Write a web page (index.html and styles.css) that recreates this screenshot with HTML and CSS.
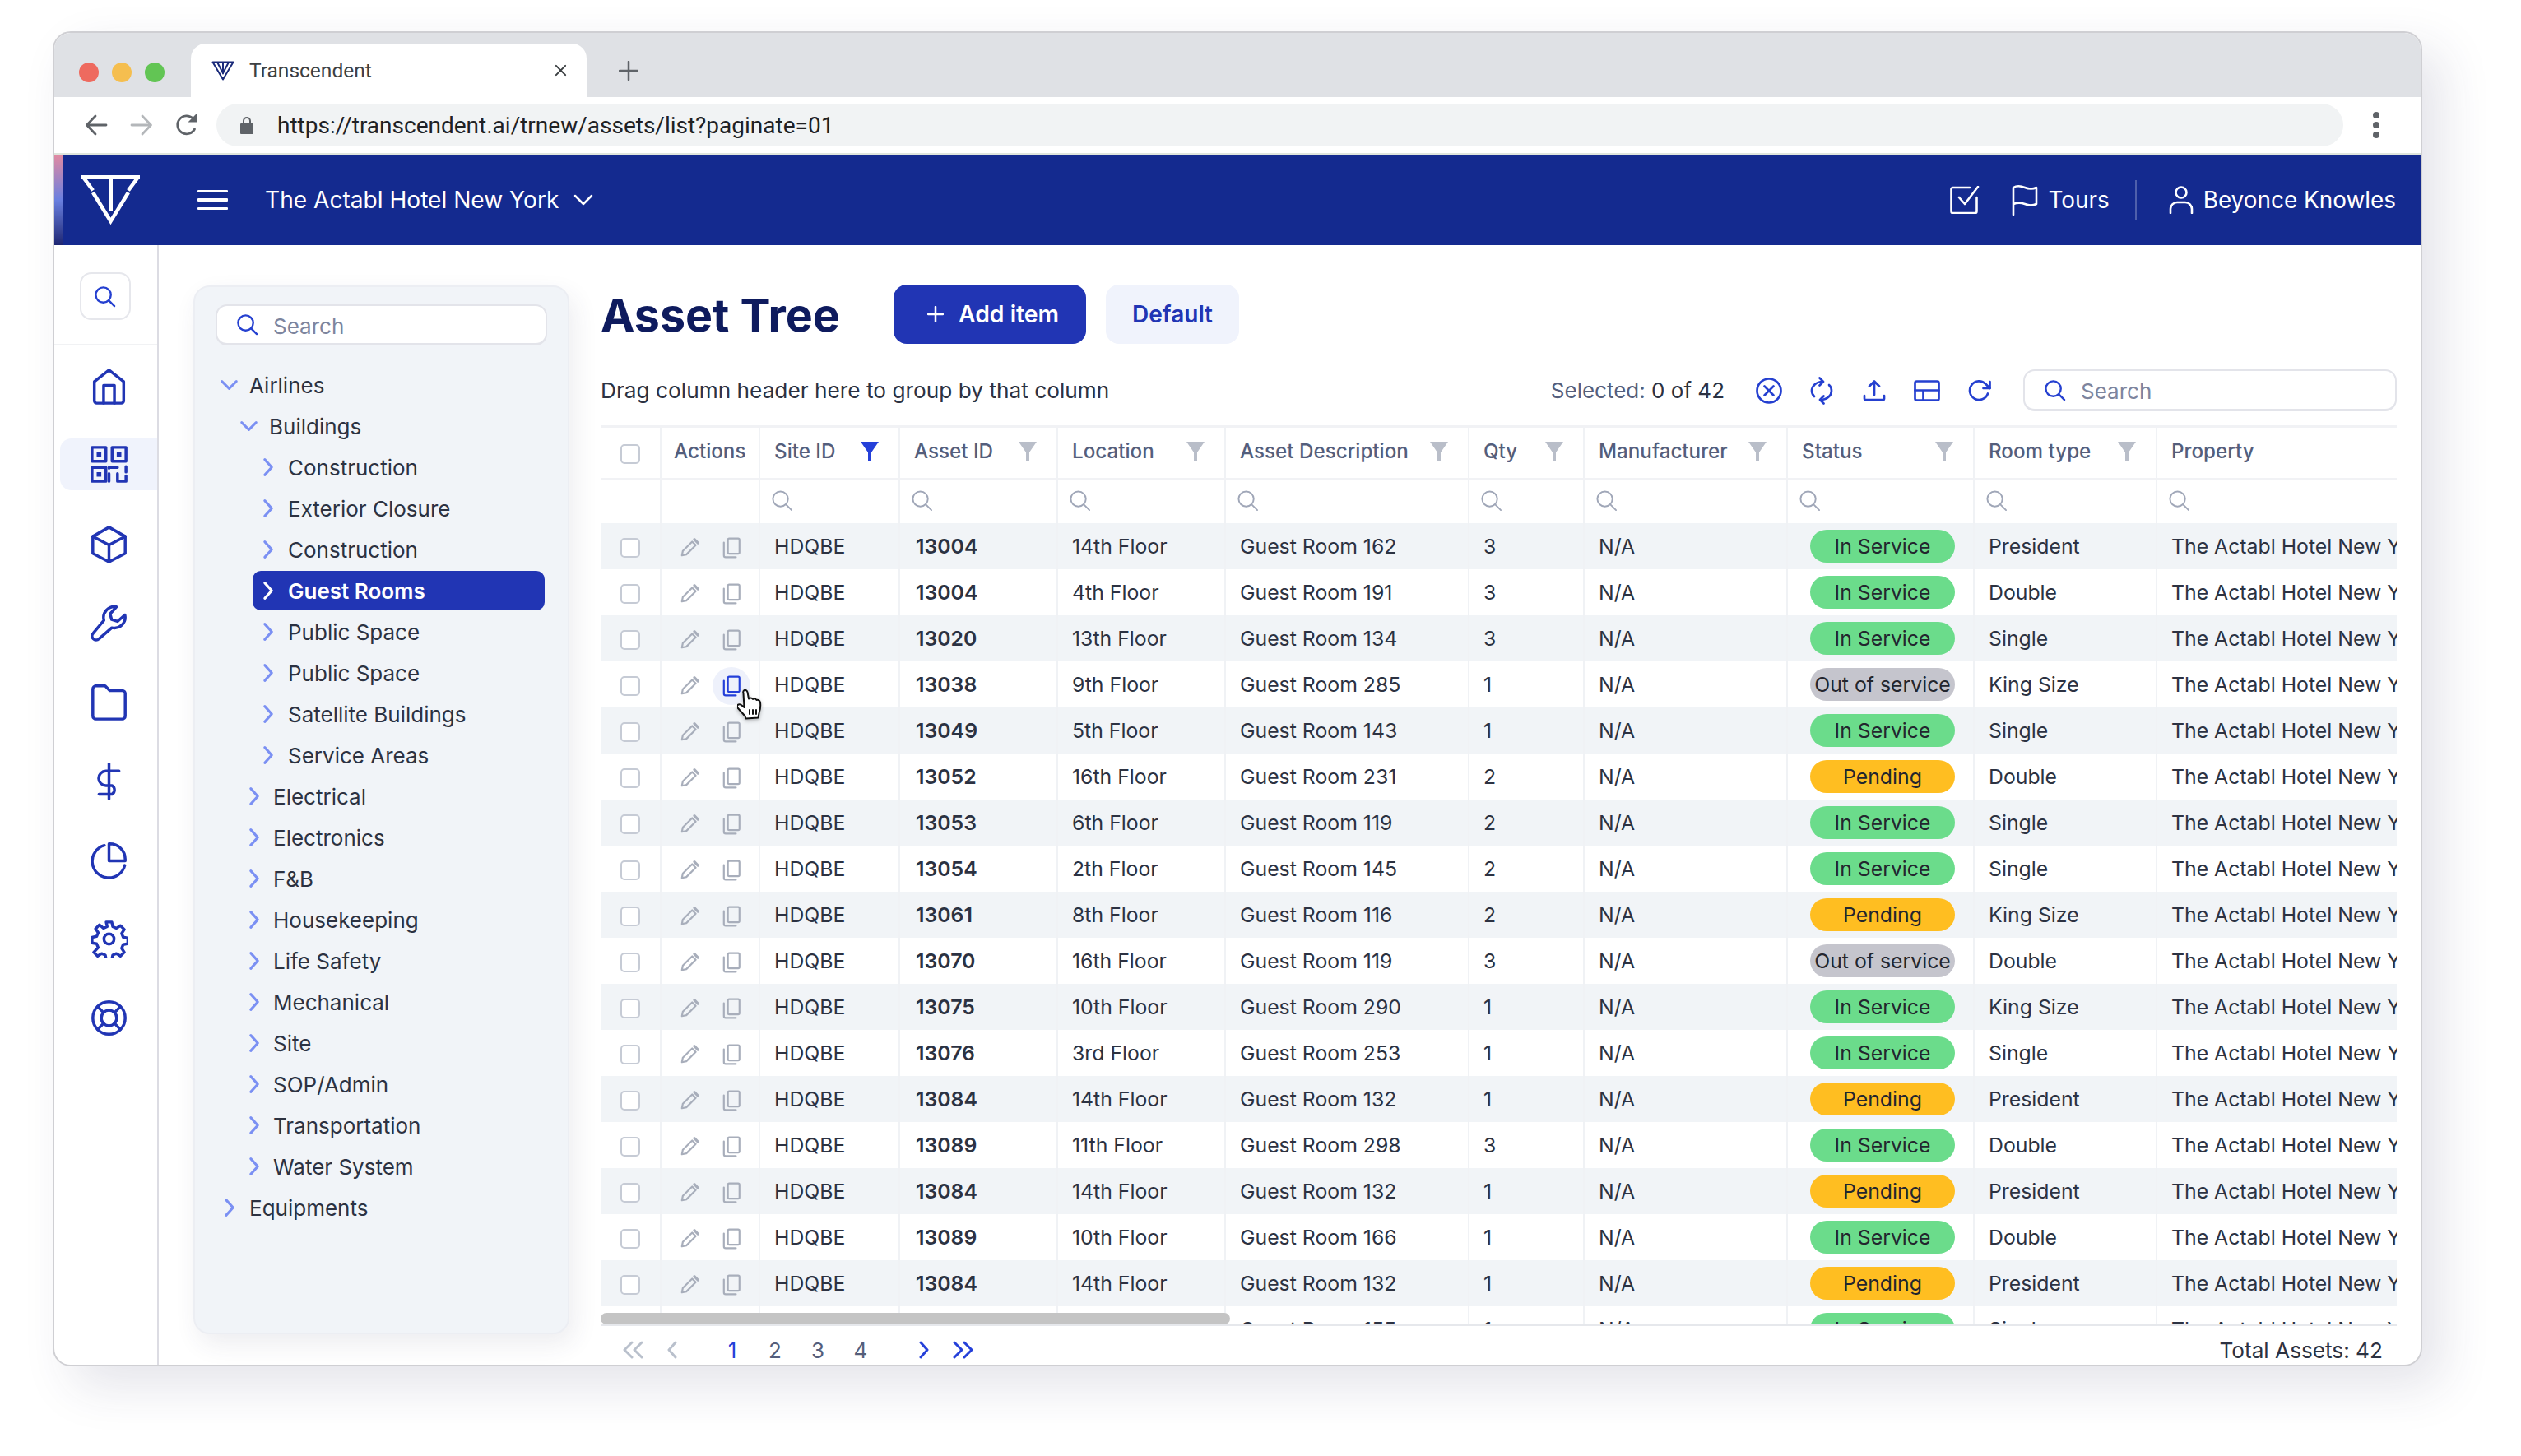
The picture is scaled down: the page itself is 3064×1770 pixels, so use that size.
FILE: index.html
```html
<!DOCTYPE html>
<html lang="en">
<head>
<meta charset="utf-8">
<title>Transcendent</title>
<link rel="stylesheet" href="styles.css">
</head>
<body>
<svg class="defs" width="0" height="0" aria-hidden="true">
  <symbol id="i-search" viewBox="0 0 28 28"><circle cx="12" cy="12" r="9.5"/><path d="M19 19l7 7"/></symbol>
  <symbol id="i-funnel" viewBox="0 0 22 24"><path class="solid" d="M0 0h22l-9 13v10a2 2 0 0 1-4 0V13z"/></symbol>
  <symbol id="i-pencil" viewBox="0 0 24 24"><path d="M3.500 20.500l1-5L15 5l4 4L8.500 19.500z"/><path d="M17.500 2.500l4 4" stroke-width="3"/></symbol>
  <symbol id="i-copy" viewBox="0 0 24 24"><rect x="8" y="1.500" width="13" height="17" rx="1.500"/><path d="M3.500 6v14.500a2 2 0 0 0 2 2H17"/></symbol>
  <symbol id="i-chev-r" viewBox="0 0 16 24"><path d="M3 2l9 10-9 10"/></symbol>
  <symbol id="i-chev-d" viewBox="0 0 24 16"><path d="M2 3l10 10L22 3"/></symbol>
</svg>

<div class="window">
  <div class="tabbar">
    <div class="dots"><span class="dot red"></span><span class="dot amber"></span><span class="dot green"></span></div>
    <div class="tab">
      <svg class="favicon" viewBox="0 0 28 24"><path d="M1.500 1.500h25L14 22.500zM7 1.500L14 15l7-13.500M14 1.500v14"/></svg>
      <span class="tab-title">Transcendent</span>
      <svg class="tab-x" viewBox="0 0 16 16"><path d="M2 2l12 12M14 2L2 14"/></svg>
    </div>
    <svg class="tab-plus" viewBox="0 0 24 24"><path d="M12 1v22M1 12h22"/></svg>
  </div>

  <div class="toolbar">
    <svg class="nav-arrow" viewBox="0 0 28 28"><path d="M26 14H3M13 3L2.500 14 13 25"/></svg>
    <svg class="nav-arrow faded" viewBox="0 0 28 28"><path d="M2 14h23M15 3l10.500 11L15 25"/></svg>
    <svg class="nav-arrow reload" viewBox="0 0 28 28"><path d="M23.500 19A11 11 0 1 1 21.500 6"/><path class="solid" d="M15.500 10.500H26V0z"/></svg>
    <div class="urlbar">
      <svg class="lock" viewBox="0 0 16 22"><path class="solid" d="M1 9h14a1 1 0 0 1 1 1v11a1 1 0 0 1-1 1H1a1 1 0 0 1-1-1V10a1 1 0 0 1 1-1z"/><path d="M4 10V6a4 4 0 0 1 8 0v4"/></svg>
      <span class="url">https://transcendent.ai/trnew/assets/list?paginate=01</span>
    </div>
    <div class="kebab"><i></i><i></i><i></i></div>
  </div>

  <header class="appbar">
    <div class="brand">
      <svg class="logo" viewBox="0 0 71 61"><path d="M0 2.200h71"/><path d="M1.500 1.500L14 18.500M69.500 1.500L57 18.500"/><path d="M14 21L35.500 56 57 21"/><path class="stem" d="M35.500 3v41"/></svg>
    </div>
    <div class="burger"><i></i><i></i><i></i></div>
    <span class="hotel">The Actabl Hotel New York</span>
    <svg class="hotel-chev" viewBox="0 0 24 16"><path d="M2 3l10 10L22 3"/></svg>
    <div class="appbar-right">
      <svg class="bar-check" viewBox="0 0 36 34"><path d="M24 2H3.500A2 2 0 0 0 1.500 4v27a2 2 0 0 0 2 2h27a2 2 0 0 0 2-2V14"/><path d="M11 14l7 8L34 1"/></svg>
      <svg class="bar-flag" viewBox="0 0 32 37"><path d="M2 36V3c5-3 9-2 14 0s10 2 14 0v20c-4 2-9 2-14 0S7 21 2 23"/></svg>
      <span class="bar-text tours">Tours</span>
      <span class="bar-sep"></span>
      <svg class="bar-user" viewBox="0 0 30 34"><circle cx="15" cy="8" r="6.500"/><path d="M2 33v-5a8 8 0 0 1 8-8h10a8 8 0 0 1 8 8v5"/></svg>
      <span class="bar-text">Beyonce Knowles</span>
    </div>
  </header>

  <div class="workspace">
    <nav class="rail">
      <div class="rail-top">
        <button class="rail-search" type="button"><svg class="ic-search-blue"><use href="#i-search"/></svg></button>
      </div>
      <div class="rail-items">
        <a class="rail-item"><svg viewBox="0 0 24 24"><path d="M2.500 21.500V9L12 1.500 21.500 9v12.500a1.500 1.500 0 0 1-1.500 1.500H4a1.500 1.500 0 0 1-1.500-1.500z"/><path d="M8.500 23V11.500h7V23"/></svg></a>
        <a class="rail-item active"><svg viewBox="0 0 24 24"><rect x="1" y="1" width="9" height="9"/><rect x="14" y="1" width="9" height="9"/><rect x="1" y="14" width="9" height="9"/><path class="solid" d="M4 4h3v3H4zM17 4h3v3h-3zM4 17h3v3H4z"/><path d="M12 14.500V14h5.500M23 13.500V17M17.500 18v5H23v-3.500M12 18v5"/></svg></a>
        <a class="rail-item"><svg viewBox="0 0 24 24"><path d="M12 1l10.500 6v11L12 23.500 1.500 18V7z"/><path d="M1.500 7L12 12.500 22.500 7M12 12.500v11"/></svg></a>
        <a class="rail-item"><svg viewBox="0 0 24 24"><path d="M22.300 6.700l-4.800 4.200-3.800-1.200-1-3.700L16.800 1.500A7 7 0 0 0 8.700 10.200L1.800 18.500a2.600 2.600 0 0 0 3.700 3.700l8.300-7.200a7 7 0 0 0 8.500-8.300z"/></svg></a>
        <a class="rail-item"><svg viewBox="0 0 24 24"><path d="M1.500 3.500a2 2 0 0 1 2-2h6l3 3h8a2 2 0 0 1 2 2V21a2 2 0 0 1-2 2h-17a2 2 0 0 1-2-2z"/></svg></a>
        <a class="rail-item"><svg viewBox="0 0 24 24"><path d="M12 .5v23M18.500 5.500H10a4.700 4.700 0 0 0 0 9.400h4a3.300 3.300 0 0 1 0 5.600H5.500"/></svg></a>
        <a class="rail-item"><svg viewBox="0 0 24 24"><path d="M9 2.500A10.700 10.700 0 1 0 22.200 15.500"/><path d="M12.500 1.500a10 10 0 0 1 10 10v1h-10.500V1.500z"/></svg></a>
        <a class="rail-item"><svg viewBox="0 0 24 24"><circle cx="12" cy="12" r="3.300"/><path d="M10.200 1h3.600l.6 3 2.400 1 2.600-1.700 2.500 2.500-1.700 2.600 1 2.400 3 .6v3.600l-3 .6-1 2.400 1.700 2.600-2.500 2.500-2.600-1.700-2.400 1-.6 3h-3.600l-.6-3-2.400-1-2.600 1.700-2.500-2.500L5 17.500l-1-2.400-3-.6v-3.600l3-.6 1-2.400-1.700-2.600 2.500-2.500L8.400 5l2.400-1z"/></svg></a>
        <a class="rail-item"><svg viewBox="0 0 24 24"><circle cx="12" cy="12" r="10.500"/><circle cx="12" cy="12" r="5"/><path d="M4.600 4.600l3.900 3.900M19.400 4.600l-3.900 3.900M4.600 19.400l3.900-3.900M19.400 19.400l-3.900-3.900"/></svg></a>
      </div>
    </nav>

    <aside class="tree-panel">
      <div class="input tree-search"><svg class="ic-search-blue"><use href="#i-search"/></svg><span>Search</span></div>
      <ul class="tree">
        <li class="node lv0"><svg class="chev-d"><use href="#i-chev-d"/></svg><span>Airlines</span></li>
        <li class="node lv1"><svg class="chev-d"><use href="#i-chev-d"/></svg><span>Buildings</span></li>
        <li class="node lv2"><svg class="chev-r"><use href="#i-chev-r"/></svg><span>Construction</span></li>
        <li class="node lv2"><svg class="chev-r"><use href="#i-chev-r"/></svg><span>Exterior Closure</span></li>
        <li class="node lv2"><svg class="chev-r"><use href="#i-chev-r"/></svg><span>Construction</span></li>
        <li class="node lv2 selected"><svg class="chev-r"><use href="#i-chev-r"/></svg><span>Guest Rooms</span></li>
        <li class="node lv2"><svg class="chev-r"><use href="#i-chev-r"/></svg><span>Public Space</span></li>
        <li class="node lv2"><svg class="chev-r"><use href="#i-chev-r"/></svg><span>Public Space</span></li>
        <li class="node lv2"><svg class="chev-r"><use href="#i-chev-r"/></svg><span>Satellite Buildings</span></li>
        <li class="node lv2"><svg class="chev-r"><use href="#i-chev-r"/></svg><span>Service Areas</span></li>
        <li class="node lv1b"><svg class="chev-r"><use href="#i-chev-r"/></svg><span>Electrical</span></li>
        <li class="node lv1b"><svg class="chev-r"><use href="#i-chev-r"/></svg><span>Electronics</span></li>
        <li class="node lv1b"><svg class="chev-r"><use href="#i-chev-r"/></svg><span>F&amp;B</span></li>
        <li class="node lv1b"><svg class="chev-r"><use href="#i-chev-r"/></svg><span>Housekeeping</span></li>
        <li class="node lv1b"><svg class="chev-r"><use href="#i-chev-r"/></svg><span>Life Safety</span></li>
        <li class="node lv1b"><svg class="chev-r"><use href="#i-chev-r"/></svg><span>Mechanical</span></li>
        <li class="node lv1b"><svg class="chev-r"><use href="#i-chev-r"/></svg><span>Site</span></li>
        <li class="node lv1b"><svg class="chev-r"><use href="#i-chev-r"/></svg><span>SOP/Admin</span></li>
        <li class="node lv1b"><svg class="chev-r"><use href="#i-chev-r"/></svg><span>Transportation</span></li>
        <li class="node lv1b"><svg class="chev-r"><use href="#i-chev-r"/></svg><span>Water System</span></li>
        <li class="node lv0b"><svg class="chev-r"><use href="#i-chev-r"/></svg><span>Equipments</span></li>
      </ul>
    </aside>

    <main class="content">
      <div class="title-row">
        <h1>Asset Tree</h1>
        <button class="btn primary" type="button"><svg viewBox="0 0 20 20"><path d="M10 1v18M1 10h18"/></svg>Add item</button>
        <button class="btn soft" type="button">Default</button>
      </div>
      <div class="grid-tools">
        <span class="group-hint">Drag column header here to group by that column</span>
        <span class="selected-count">Selected: <b>0 of 42</b></span>
        <div class="tool-icons">
          <svg viewBox="0 0 32 32"><circle cx="16" cy="16" r="14.500"/><path d="M10.500 10.500l11 11M21.500 10.500l-11 11"/></svg>
          <svg viewBox="0 0 32 34"><path d="M17 6C9 6 4 11.500 4 17c0 3 1 5 3 7M15 28c8 0 13-5.500 13-11 0-3-1-5-3-7"/><path d="M13.500 1.500L18 6l-4.500 4.500M18.500 32.500L14 28l4.500-4.500"/></svg>
          <svg viewBox="0 0 32 32"><path d="M16 21V5M10 10.500l6-6 6 6M4 22v4a1 1 0 0 0 1 1h22a1 1 0 0 0 1-1v-4"/></svg>
          <svg viewBox="0 0 32 32"><rect x="1.500" y="4.500" width="29" height="23" rx="2"/><path d="M1.500 15.500h29M11.500 15.500v12"/></svg>
          <svg viewBox="0 0 32 32"><path d="M28.500 5v8h-8"/><path d="M26 19.500a11.300 11.300 0 1 1-2.600-11.700L28.500 13"/></svg>
        </div>
        <div class="input grid-search"><svg class="ic-search-blue"><use href="#i-search"/></svg><span>Search</span></div>
      </div>

      <div class="grid-wrap">
        <table class="grid">
          <colgroup>
            <col class="c-check"><col class="c-actions"><col class="c-site"><col class="c-asset"><col class="c-loc"><col class="c-desc"><col class="c-qty"><col class="c-maker"><col class="c-status"><col class="c-room"><col class="c-prop">
          </colgroup>
          <thead>
            <tr class="head">
              <th class="center"><span class="box"></span></th>
              <th class="th-actions">Actions</th>
              <th>Site ID<svg class="funnel on"><use href="#i-funnel"/></svg></th>
              <th>Asset ID<svg class="funnel"><use href="#i-funnel"/></svg></th>
              <th>Location<svg class="funnel"><use href="#i-funnel"/></svg></th>
              <th>Asset Description<svg class="funnel"><use href="#i-funnel"/></svg></th>
              <th>Qty<svg class="funnel"><use href="#i-funnel"/></svg></th>
              <th>Manufacturer<svg class="funnel"><use href="#i-funnel"/></svg></th>
              <th>Status<svg class="funnel"><use href="#i-funnel"/></svg></th>
              <th>Room type<svg class="funnel"><use href="#i-funnel"/></svg></th>
              <th>Property</th>
            </tr>
            <tr class="filters">
              <td></td><td></td>
              <td><svg class="ic-filter"><use href="#i-search"/></svg></td>
              <td><svg class="ic-filter"><use href="#i-search"/></svg></td>
              <td><svg class="ic-filter"><use href="#i-search"/></svg></td>
              <td><svg class="ic-filter"><use href="#i-search"/></svg></td>
              <td><svg class="ic-filter"><use href="#i-search"/></svg></td>
              <td><svg class="ic-filter"><use href="#i-search"/></svg></td>
              <td><svg class="ic-filter"><use href="#i-search"/></svg></td>
              <td><svg class="ic-filter"><use href="#i-search"/></svg></td>
              <td><svg class="ic-filter"><use href="#i-search"/></svg></td>
            </tr>
          </thead>
          <tbody>
            <tr><td class="center"><span class="box"></span></td><td class="acts"><svg class="act"><use href="#i-pencil"/></svg><svg class="act"><use href="#i-copy"/></svg></td><td>HDQBE</td><td class="id">13004</td><td>14th Floor</td><td>Guest Room 162</td><td>3</td><td>N/A</td><td><span class="pill ok">In Service</span></td><td>President</td><td>The Actabl Hotel New York</td></tr>
            <tr><td class="center"><span class="box"></span></td><td class="acts"><svg class="act"><use href="#i-pencil"/></svg><svg class="act"><use href="#i-copy"/></svg></td><td>HDQBE</td><td class="id">13004</td><td>4th Floor</td><td>Guest Room 191</td><td>3</td><td>N/A</td><td><span class="pill ok">In Service</span></td><td>Double</td><td>The Actabl Hotel New York</td></tr>
            <tr><td class="center"><span class="box"></span></td><td class="acts"><svg class="act"><use href="#i-pencil"/></svg><svg class="act"><use href="#i-copy"/></svg></td><td>HDQBE</td><td class="id">13020</td><td>13th Floor</td><td>Guest Room 134</td><td>3</td><td>N/A</td><td><span class="pill ok">In Service</span></td><td>Single</td><td>The Actabl Hotel New York</td></tr>
            <tr><td class="center"><span class="box"></span></td><td class="acts"><svg class="act"><use href="#i-pencil"/></svg><span class="hover-wrap"><svg class="act hot"><use href="#i-copy"/></svg><svg class="cursor" viewBox="0 0 30 38"><path d="M8 2.500c2-1.500 4 0 4.500 2l1.500 8 .5-.5c2-1 3.500-.5 4.500 1 1.500-1 3.500-.5 4.500 1 2-.5 4 .5 4.500 3 .5 4 0 9-1.500 13l-1 5.500-15 1-1-3-9-10c-1-1.500-.5-3.500 1-4 1.500-.5 3 0 4 1l3 2.500L7.500 6c-.5-1.500 0-3 .5-3.500z"/><path class="stripes" d="M15 26v5M19 26v5M23 26v5"/></svg></span></td><td>HDQBE</td><td class="id">13038</td><td>9th Floor</td><td>Guest Room 285</td><td>1</td><td>N/A</td><td><span class="pill off">Out of service</span></td><td>King Size</td><td>The Actabl Hotel New York</td></tr>
            <tr><td class="center"><span class="box"></span></td><td class="acts"><svg class="act"><use href="#i-pencil"/></svg><svg class="act"><use href="#i-copy"/></svg></td><td>HDQBE</td><td class="id">13049</td><td>5th Floor</td><td>Guest Room 143</td><td>1</td><td>N/A</td><td><span class="pill ok">In Service</span></td><td>Single</td><td>The Actabl Hotel New York</td></tr>
            <tr><td class="center"><span class="box"></span></td><td class="acts"><svg class="act"><use href="#i-pencil"/></svg><svg class="act"><use href="#i-copy"/></svg></td><td>HDQBE</td><td class="id">13052</td><td>16th Floor</td><td>Guest Room 231</td><td>2</td><td>N/A</td><td><span class="pill wait">Pending</span></td><td>Double</td><td>The Actabl Hotel New York</td></tr>
            <tr><td class="center"><span class="box"></span></td><td class="acts"><svg class="act"><use href="#i-pencil"/></svg><svg class="act"><use href="#i-copy"/></svg></td><td>HDQBE</td><td class="id">13053</td><td>6th Floor</td><td>Guest Room 119</td><td>2</td><td>N/A</td><td><span class="pill ok">In Service</span></td><td>Single</td><td>The Actabl Hotel New York</td></tr>
            <tr><td class="center"><span class="box"></span></td><td class="acts"><svg class="act"><use href="#i-pencil"/></svg><svg class="act"><use href="#i-copy"/></svg></td><td>HDQBE</td><td class="id">13054</td><td>2th Floor</td><td>Guest Room 145</td><td>2</td><td>N/A</td><td><span class="pill ok">In Service</span></td><td>Single</td><td>The Actabl Hotel New York</td></tr>
            <tr><td class="center"><span class="box"></span></td><td class="acts"><svg class="act"><use href="#i-pencil"/></svg><svg class="act"><use href="#i-copy"/></svg></td><td>HDQBE</td><td class="id">13061</td><td>8th Floor</td><td>Guest Room 116</td><td>2</td><td>N/A</td><td><span class="pill wait">Pending</span></td><td>King Size</td><td>The Actabl Hotel New York</td></tr>
            <tr><td class="center"><span class="box"></span></td><td class="acts"><svg class="act"><use href="#i-pencil"/></svg><svg class="act"><use href="#i-copy"/></svg></td><td>HDQBE</td><td class="id">13070</td><td>16th Floor</td><td>Guest Room 119</td><td>3</td><td>N/A</td><td><span class="pill off">Out of service</span></td><td>Double</td><td>The Actabl Hotel New York</td></tr>
            <tr><td class="center"><span class="box"></span></td><td class="acts"><svg class="act"><use href="#i-pencil"/></svg><svg class="act"><use href="#i-copy"/></svg></td><td>HDQBE</td><td class="id">13075</td><td>10th Floor</td><td>Guest Room 290</td><td>1</td><td>N/A</td><td><span class="pill ok">In Service</span></td><td>King Size</td><td>The Actabl Hotel New York</td></tr>
            <tr><td class="center"><span class="box"></span></td><td class="acts"><svg class="act"><use href="#i-pencil"/></svg><svg class="act"><use href="#i-copy"/></svg></td><td>HDQBE</td><td class="id">13076</td><td>3rd Floor</td><td>Guest Room 253</td><td>1</td><td>N/A</td><td><span class="pill ok">In Service</span></td><td>Single</td><td>The Actabl Hotel New York</td></tr>
            <tr><td class="center"><span class="box"></span></td><td class="acts"><svg class="act"><use href="#i-pencil"/></svg><svg class="act"><use href="#i-copy"/></svg></td><td>HDQBE</td><td class="id">13084</td><td>14th Floor</td><td>Guest Room 132</td><td>1</td><td>N/A</td><td><span class="pill wait">Pending</span></td><td>President</td><td>The Actabl Hotel New York</td></tr>
            <tr><td class="center"><span class="box"></span></td><td class="acts"><svg class="act"><use href="#i-pencil"/></svg><svg class="act"><use href="#i-copy"/></svg></td><td>HDQBE</td><td class="id">13089</td><td>11th Floor</td><td>Guest Room 298</td><td>3</td><td>N/A</td><td><span class="pill ok">In Service</span></td><td>Double</td><td>The Actabl Hotel New York</td></tr>
            <tr><td class="center"><span class="box"></span></td><td class="acts"><svg class="act"><use href="#i-pencil"/></svg><svg class="act"><use href="#i-copy"/></svg></td><td>HDQBE</td><td class="id">13084</td><td>14th Floor</td><td>Guest Room 132</td><td>1</td><td>N/A</td><td><span class="pill wait">Pending</span></td><td>President</td><td>The Actabl Hotel New York</td></tr>
            <tr><td class="center"><span class="box"></span></td><td class="acts"><svg class="act"><use href="#i-pencil"/></svg><svg class="act"><use href="#i-copy"/></svg></td><td>HDQBE</td><td class="id">13089</td><td>10th Floor</td><td>Guest Room 166</td><td>1</td><td>N/A</td><td><span class="pill ok">In Service</span></td><td>Double</td><td>The Actabl Hotel New York</td></tr>
            <tr><td class="center"><span class="box"></span></td><td class="acts"><svg class="act"><use href="#i-pencil"/></svg><svg class="act"><use href="#i-copy"/></svg></td><td>HDQBE</td><td class="id">13084</td><td>14th Floor</td><td>Guest Room 132</td><td>1</td><td>N/A</td><td><span class="pill wait">Pending</span></td><td>President</td><td>The Actabl Hotel New York</td></tr>
            <tr><td class="center"><span class="box"></span></td><td class="acts"><svg class="act"><use href="#i-pencil"/></svg><svg class="act"><use href="#i-copy"/></svg></td><td>HDQBE</td><td class="id">13089</td><td>8th Floor</td><td>Guest Room 155</td><td>1</td><td>N/A</td><td><span class="pill ok">In Service</span></td><td>Single</td><td>The Actabl Hotel New York</td></tr>
          </tbody>
        </table>
        <div class="scrollbar"></div>
      </div>

      <div class="pager">
        <svg class="pg dis wide" viewBox="0 0 28 22"><path d="M13 2L4 11l9 9M25 2l-9 9 9 9"/></svg>
        <svg class="pg dis" viewBox="0 0 14 22"><path d="M11 2l-8 9 8 9"/></svg>
        <div class="pages"><a class="cur">1</a><a>2</a><a>3</a><a>4</a></div>
        <svg class="pg" viewBox="0 0 14 22"><path d="M3 2l8 9-8 9"/></svg>
        <svg class="pg wide" viewBox="0 0 28 22"><path d="M3 2l9 9-9 9M15 2l9 9-9 9"/></svg>
        <span class="total">Total Assets: 42</span>
      </div>
    </main>
  </div>
</div>
</body>
</html>
```
FILE: styles.css
```css
* { box-sizing: border-box; }
html, body { margin: 0; background: #fff; }
body {
  width: 3064px;
  height: 1770px;
  padding: 38px 120px 0 64px;
  font-family: Inter, "Liberation Sans", sans-serif;
  color: #2c3242;
  overflow: hidden;
}
.defs { position: absolute; }
svg { fill: none; stroke: currentColor; stroke-linecap: round; stroke-linejoin: round; display: block; flex: none; }
svg .solid, .solid { fill: currentColor; stroke: none; }

.window {
  width: 2880px;
  height: 1623px;
  background: #fff;
  border: 2px solid #cfcfd3;
  border-radius: 22px;
  box-shadow: 24px 24px 60px rgba(50, 50, 90, .13);
  overflow: hidden;
  display: flex;
  flex-direction: column;
}

/* Browser chrome */
.tabbar { height: 78px; background: #dfe1e5; display: flex; align-items: flex-end; padding-left: 166px; position: relative; flex: none; }
.dots { position: absolute; left: 30px; top: 36px; display: flex; gap: 16px; }
.dot { width: 24px; height: 24px; border-radius: 50%; }
.red { background: #ee6a5f; }
.amber { background: #f5be4f; }
.green { background: #62c554; }
.tab { width: 481px; height: 65px; background: #fff; border-radius: 18px 18px 0 0; display: flex; align-items: center; padding: 0 24px 0 25px; color: #3c4043; }
.favicon { width: 28px; height: 24px; color: #1a2a7a; stroke-width: 2; margin-right: 18px; }
.tab-title { font: 400 24.5px Roboto, sans-serif; flex: 1; }
.tab-x { width: 15px; height: 15px; stroke-width: 2.2; }
.tab-plus { width: 24px; height: 24px; color: #5f6368; stroke-width: 2.5; margin: 0 0 20px 39px; }

.toolbar { height: 70px; border-bottom: 2px solid #dfe5dd; display: flex; align-items: center; flex: none; padding: 0 0 0 37px; }
.nav-arrow { width: 28px; height: 28px; color: #5f6368; stroke-width: 2.800; margin-right: 27px; }
.nav-arrow.faded { color: #b4b7ba; }
.nav-arrow.reload { margin-right: 22px; }
.urlbar { width: 2585px; height: 52px; background: #f1f3f4; border-radius: 26px; display: flex; align-items: center; padding-left: 29px; }
.lock { width: 16px; height: 22px; color: #5f6368; stroke-width: 2; margin-right: 29px; }
.url { font: 400 28px Roboto, sans-serif; color: #202124; }
.kebab { display: flex; flex-direction: column; gap: 4px; margin-left: 36px; }
.kebab i { width: 8px; height: 8px; border-radius: 50%; background: #5f6368; }

/* App bar */
.appbar { height: 110px; background: #142a8f; display: flex; align-items: center; color: #fff; flex: none; }
.brand { width: 127px; height: 100%; border-left: 11px solid; border-image: linear-gradient(#e48aa0, #6a80e0 50%, #1c2470) 1; display: flex; align-items: center; padding-left: 22px; }
.logo { width: 71px; height: 61px; stroke: #fff; stroke-width: 4.500; stroke-linecap: butt; stroke-linejoin: miter; }
.logo .stem { stroke-width: 5; }
.burger { display: flex; flex-direction: column; gap: 7px; margin-left: 47px; }
.burger i { width: 37px; height: 3.500px; background: #fff; border-radius: 1px; }
.hotel { font-size: 28.1px; margin-left: 45px; white-space: nowrap; }
.hotel-chev { width: 24px; height: 16px; stroke-width: 2.500; margin-left: 18px; }
.appbar-right { margin-left: auto; display: flex; align-items: center; padding-right: 30px; }
.bar-check { width: 36px; height: 34px; stroke-width: 2.600; margin-right: 39px; }
.bar-flag { width: 32px; height: 37px; stroke-width: 2.600; margin-right: 12px; }
.bar-text { font-size: 27.900px; white-space: nowrap; }
.bar-sep { width: 2px; height: 49px; background: rgba(255, 255, 255, .25); margin: 0 39px 0 31px; }
.bar-user { width: 30px; height: 34px; stroke-width: 2.600; margin-right: 12px; }

/* Workspace */
.workspace { flex: 1; display: flex; min-height: 0; }
.rail { width: 127px; flex: none; border-right: 2px solid #dcdce3; display: flex; flex-direction: column; }
.rail-top { height: 122px; border-bottom: 2px solid #f1f2f4; display: flex; justify-content: center; padding: 33px 2px 0 0; flex: none; }
.rail-search { width: 62px; height: 58px; padding: 0; background: #fff; border: 2px solid #e6e7ec; border-radius: 14px; display: flex; align-items: center; justify-content: center; }
.ic-search-blue { width: 27px; height: 27px; color: #2540d0; stroke-width: 2.500; }
.rail-items { display: flex; flex-direction: column; padding: 1px 0 0 7px; }
.rail-item { height: 96px; display: flex; align-items: center; justify-content: center; color: #2135b4; border-radius: 14px 0 0 14px; }
.rail-item svg { width: 45px; height: 45px; stroke-width: 1.850; }
.rail-item.active { background: #f0f3fc; height: 63px; margin: 16px 0 17px; }

.tree-panel { width: 457px; height: 1275px; margin: 49px 38px 0 42px; flex: none; background: #f1f4f8; border-radius: 20px; border: 2px solid #eceef3; box-shadow: 6px 12px 30px rgba(50, 50, 90, .09); padding: 21px 25px 0 25px; }
.input { background: #fff; border: 2px solid #e3e4ea; border-bottom-width: 3px; border-radius: 14px; display: flex; align-items: center; gap: 18px; padding-left: 23px; font-size: 26px; color: #7d859e; }
.input span { padding-top: 2px; }
.tree-search span { padding-top: 4px; }
.tree-search { height: 50px; }
.tree { list-style: none; margin: 23px 0 0; padding: 0; }
.node { height: 50px; display: flex; align-items: center; font-size: 26px; color: #2c3242; white-space: nowrap; }
.chev-d { width: 21px; height: 14px; color: #7b90f3; stroke-width: 3.300; }
.chev-r { width: 15px; height: 24px; color: #7b90f3; stroke-width: 3.300; }
.lv0 { padding-left: 6px; gap: 14px; }
.lv1 { padding-left: 30px; gap: 14px; }
.lv2 { padding-left: 57px; gap: 16px; }
.lv1b { padding-left: 40px; gap: 15px; }
.lv0b { padding-left: 10px; gap: 16px; }
.node.selected { background: #2135b4; color: #fff; font-weight: 600; border-radius: 10px; height: 48px; margin: 1px 3px 1px 45px; padding-left: 12px; }
.selected .chev-r { color: #fff; }

/* Content */
.content { flex: none; width: 2183px; padding-top: 48px; display: flex; flex-direction: column; }
.title-row { height: 72px; display: flex; align-items: center; flex: none; }
h1 { margin: 0 66px 0 0; font-size: 55.500px; font-weight: 700; color: #0e1b5e; width: 290px; white-space: nowrap; }
.btn { height: 72px; border: 0; border-radius: 16px; font: 600 28px Inter, sans-serif; display: flex; align-items: center; justify-content: center; }
.btn.primary { width: 234px; background: #2135b4; color: #fff; gap: 18px; margin-right: 24px; padding: 0 0 0 8px; font-size: 28.3px; }
.btn.primary svg { width: 20px; height: 20px; stroke-width: 2.500; }
.btn.soft { width: 162px; background: #f0f3fc; color: #2135b4; }

.grid-tools { height: 51px; margin-top: 31px; display: flex; align-items: center; flex: none; font-size: 26px; }
.group-hint { color: #2c3242; font-size: 26.250px; }
.selected-count { margin-left: auto; color: #545e7c; }
.selected-count b { font-weight: 400; color: #2c3242; }
.tool-icons { display: flex; gap: 32px; align-items: center; color: #2540d0; margin: 0 37px 0 38px; }
.tool-icons svg { width: 32px; height: 32px; stroke-width: 2.700; }
.tool-icons svg:nth-child(2) { height: 34px; }
.grid-search { width: 454px; height: 51px; }

.grid-wrap { height: 1095px; margin-top: 17px; overflow: hidden; position: relative; flex: none; border-bottom: 2px solid #e6e8ec; }
.grid { width: 2391px; table-layout: fixed; border-collapse: collapse; font-size: 24.800px; white-space: nowrap; }
.c-check { width: 73px; } .c-actions { width: 120px; } .c-site { width: 170px; } .c-asset { width: 192px; } .c-loc { width: 204px; } .c-desc { width: 296px; } .c-qty { width: 140px; } .c-maker { width: 247px; } .c-status { width: 227px; } .c-room { width: 222px; } .c-prop { width: 500px; }
.grid th, .grid td { padding: 0 0 0 17px; border-right: 2px solid #f0f2f5; text-align: left; overflow: hidden; vertical-align: middle; }
.grid .center { padding: 0; text-align: center; }
.head { height: 64px; border-top: 3px solid #f1f2f5; border-bottom: 3px solid #f1f2f5; }
.grid th { font-size: 24.200px; font-weight: 500; color: #545e7c; position: relative; padding-bottom: 5px; }
.grid th.th-actions { padding-left: 15px; }
.filters { height: 53px; }
.filters td { padding-bottom: 2px; }
.grid tbody tr { height: 56px; }
.grid tbody tr:nth-child(odd) { background: #f1f4f7; }
.box { display: inline-block; width: 24px; height: 24px; background: #fff; border: 2px solid #c6cbd5; border-radius: 5px; vertical-align: middle; }
.funnel { position: absolute; right: 24px; top: 17px; width: 22px; height: 24px; color: #b9bec9; }
.funnel.on { color: #2540d9; }
.ic-filter { width: 27px; height: 27px; color: #a0a7b8; stroke-width: 2; margin-left: -4px; }
.acts .act { width: 26px; height: 26px; color: #a8aebb; stroke-width: 2; }
.grid td.acts { padding: 0 0 0 21px; overflow: visible; position: relative; }
.grid td.acts > *, .hover-wrap { display: inline-block; vertical-align: middle; }
.grid td.acts > .act:first-child { margin-right: 25px; }
.hover-wrap { position: relative; width: 26px; height: 26px; }
.hover-wrap::before { content: ""; position: absolute; left: -10px; top: -10px; width: 46px; height: 46px; border-radius: 50%; background: #eef1fb; }
.act.hot { position: relative; color: #2540d9; }
.cursor { position: absolute; z-index: 2; left: 20px; top: 16px; width: 30px; height: 38px; color: #111; fill: #fff; stroke-width: 2; filter: drop-shadow(0 2px 2px rgba(0, 0, 0, .25)); }
.id { font-weight: 600; }
.grid td.id { padding-left: 19px; }
.pill { display: block; width: 176px; height: 40px; line-height: 40px; border-radius: 20px; text-align: center; color: #23262e; margin-left: 10px; font-size: 24.800px; }
.ok { background: #6bdc8b; }
.wait { background: #ffbe21; }
.off { background: #c5c5cd; }
.scrollbar { position: absolute; left: 0; bottom: 0; width: 765px; height: 14px; background: #c4c4c4; border-radius: 7px; }

.pager { height: 50px; display: flex; align-items: center; font-size: 26px; padding: 8px 0 0 25px; color: #545e7c; flex: none; }
.pg { width: 14px; height: 22px; color: #2540d9; stroke-width: 3; margin-right: 27px; }
.pg.wide { width: 28px; }
.pg.dis { color: #b9c0cc; }
.pages { display: flex; gap: 0; margin: 0 44px 0 13px; }
.pages a { width: 52px; text-align: center; }
.pages .cur { color: #2540d9; }
.total { margin-left: auto; margin-right: 17px; color: #2c3242; font-size: 26.200px; }
```
